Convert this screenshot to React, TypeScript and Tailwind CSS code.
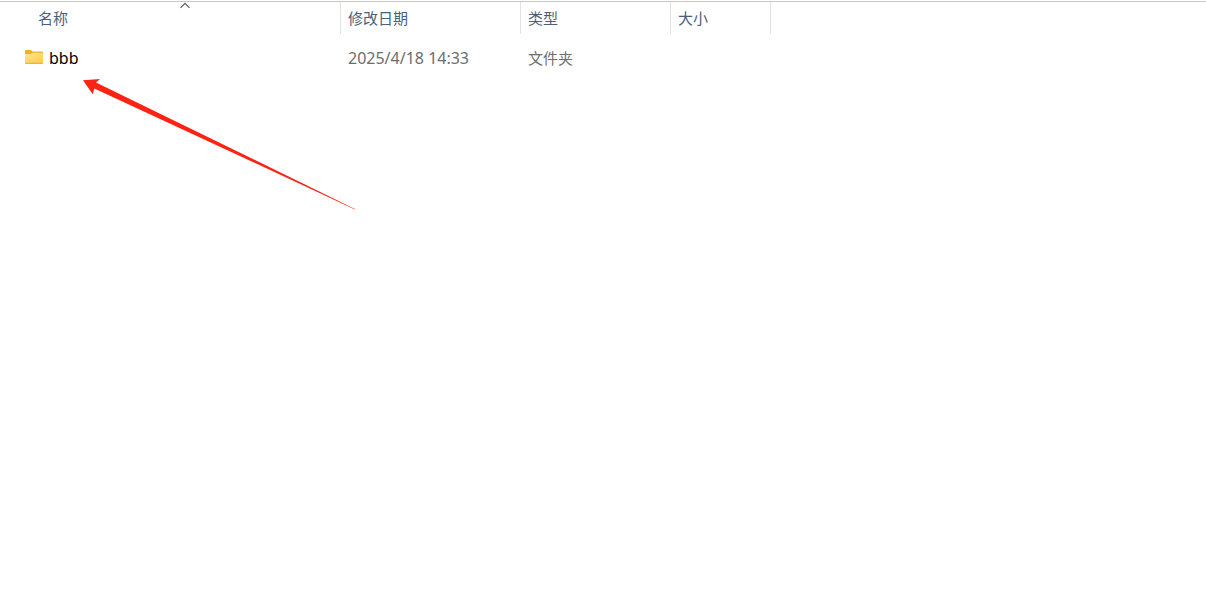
type Entry = { name: string; modified: string; kind: string; size: string };

const entries: Entry[] = [
  { name: 'bbb', modified: '2025/4/18 14:33', kind: '文件夹', size: '' },
];

function FolderIcon() {
  return (
    <svg width="20" height="18" viewBox="0 0 20 18" aria-hidden="true" className="shrink-0">
      <defs>
        <linearGradient id="folder-front" x1="0" y1="0" x2="1" y2="1">
          <stop offset="0" stopColor="#ffe59a" />
          <stop offset="1" stopColor="#fdc93f" />
        </linearGradient>
      </defs>
      <path d="M1 2a1 1 0 0 1 1-1h5l1.400 1.400H18a1 1 0 0 1 1 1V6H1z" fill="#edb220" />
      <path d="M1 5h6l1.800-1.300H19V14a.8.8 0 0 1-.8.8H1.800A.8.8 0 0 1 1 14z" fill="url(#folder-front)" />
      <path d="M1.200 14.300h17.600" stroke="#e3ac32" strokeWidth="1" />
    </svg>
  );
}

function SortArrow() {
  return (
    <svg
      width="12"
      height="8"
      viewBox="0 0 12 8"
      aria-hidden="true"
      className="absolute -right-[30px] left-0 top-0 mx-auto"
    >
      <path d="M1.500 5.800 6 1.300l4.500 4.500" fill="none" stroke="#555" strokeWidth="1.100" />
    </svg>
  );
}

function PointerArrow() {
  return (
    <svg
      width="278"
      height="136"
      viewBox="80 77 278 136"
      aria-hidden="true"
      className="pointer-events-none absolute left-20 top-[77px]"
    >
      <path d="M83 80.200 100 79 96 82.400 355.500 209.200 355 209.400 94.300 88.500 92.700 94.200z" fill="#fb2314" />
    </svg>
  );
}

function HeaderButton({ label }: { label: string }) {
  return (
    <button type="button" className="block h-8 w-full text-left">
      {label}
    </button>
  );
}

export default function App() {
  return (
    <main className="relative min-h-screen bg-white pt-px font-['Noto_Sans','Noto_Sans_CJK_SC',sans-serif]">
      <div className="border-t border-[#c9c9c2]">
        <table className="w-full table-fixed border-separate border-spacing-0 text-left">
          <colgroup>
            <col className="w-[341px]" />
            <col className="w-[180px]" />
            <col className="w-[150px]" />
            <col className="w-[100px]" />
            <col />
          </colgroup>
          <thead className="text-[15px] text-[#4c607a]">
            <tr>
              <th aria-sort="ascending" className="relative border-r border-[#e2e2e2] p-0 pl-[38px] font-normal">
                <SortArrow />
                <HeaderButton label="名称" />
              </th>
              <th className="border-r border-[#e2e2e2] p-0 pl-[7px] font-normal">
                <HeaderButton label="修改日期" />
              </th>
              <th className="border-r border-[#e2e2e2] p-0 pl-[7px] font-normal">
                <HeaderButton label="类型" />
              </th>
              <th className="border-r border-[#e2e2e2] p-0 pl-[7px] font-normal">
                <HeaderButton label="大小" />
              </th>
              <td />
            </tr>
          </thead>
          <tbody className="text-[15px] text-[#6d6d6d]">
            {entries.map((entry) => (
              <tr key={entry.name} className="h-12">
                <td className="p-0 pl-6">
                  <div className="flex items-center gap-[5px]">
                    <FolderIcon />
                    <span className="text-base text-black">{entry.name}</span>
                  </div>
                </td>
                <td className="p-0 pl-[7px] text-base">{entry.modified}</td>
                <td className="p-0 pl-[7px]">{entry.kind}</td>
                <td className="p-0 pl-[7px]">{entry.size}</td>
                <td />
              </tr>
            ))}
          </tbody>
        </table>
      </div>
      <PointerArrow />
    </main>
  );
}
